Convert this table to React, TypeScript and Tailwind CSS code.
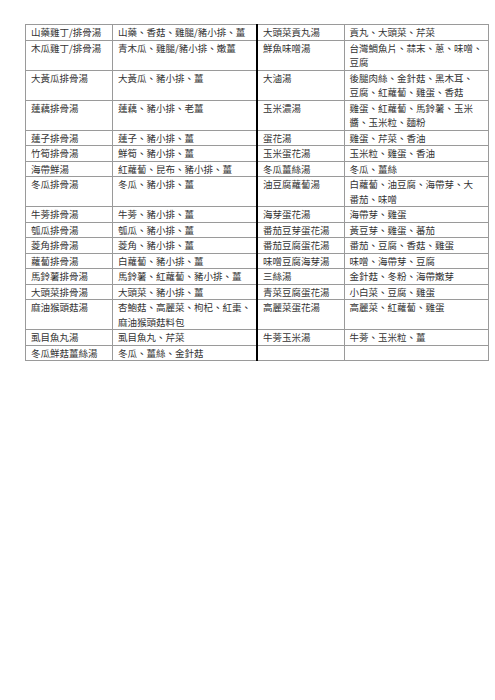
const rows: [string, string[], string, string[]][] = [
  ["山藥雞丁/排骨湯", ["山藥、香菇、雞腿/豬小排、薑"], "大頭菜貢丸湯", ["貢丸、大頭菜、芹菜"]],
  ["木瓜雞丁/排骨湯", ["青木瓜、雞腿/豬小排、嫩薑"], "鮮魚味噌湯", ["台灣鯛魚片、蒜末、蔥、味噌、", "豆腐"]],
  ["大黃瓜排骨湯", ["大黃瓜、豬小排、薑"], "大滷湯", ["後腿肉絲、金針菇、黑木耳、", "豆腐、紅蘿蔔、雞蛋、香菇"]],
  ["蓮藕排骨湯", ["蓮藕、豬小排、老薑"], "玉米濃湯", ["雞蛋、紅蘿蔔、馬鈴薯、玉米", "醬、玉米粒、麵粉"]],
  ["蓮子排骨湯", ["蓮子、豬小排、薑"], "蛋花湯", ["雞蛋、芹菜、香油"]],
  ["竹筍排骨湯", ["鮮筍、豬小排、薑"], "玉米蛋花湯", ["玉米粒、雞蛋、香油"]],
  ["海帶鮮湯", ["紅蘿蔔、昆布、豬小排、薑"], "冬瓜薑絲湯", ["冬瓜、薑絲"]],
  ["冬瓜排骨湯", ["冬瓜、豬小排、薑"], "油豆腐蘿蔔湯", ["白蘿蔔、油豆腐、海帶芽、大", "番茄、味噌"]],
  ["牛蒡排骨湯", ["牛蒡、豬小排、薑"], "海芽蛋花湯", ["海帶芽、雞蛋"]],
  ["瓠瓜排骨湯", ["瓠瓜、豬小排、薑"], "番茄豆芽蛋花湯", ["黃豆芽、雞蛋、蕃茄"]],
  ["菱角排骨湯", ["菱角、豬小排、薑"], "番茄豆腐蛋花湯", ["番茄、豆腐、香菇、雞蛋"]],
  ["蘿蔔排骨湯", ["白蘿蔔、豬小排、薑"], "味噌豆腐海芽湯", ["味噌、海帶芽、豆腐"]],
  ["馬鈴薯排骨湯", ["馬鈴薯、紅蘿蔔、豬小排、薑"], "三絲湯", ["金針菇、冬粉、海帶嫩芽"]],
  ["大頭菜排骨湯", ["大頭菜、豬小排、薑"], "青菜豆腐蛋花湯", ["小白菜、豆腐、雞蛋"]],
  ["麻油猴頭菇湯", ["杏鮑菇、高麗菜、枸杞、紅棗、", "麻油猴頭菇料包"], "高麗菜蛋花湯", ["高麗菜、紅蘿蔔、雞蛋"]],
  ["虱目魚丸湯", ["虱目魚丸、芹菜"], "牛蒡玉米湯", ["牛蒡、玉米粒、薑"]],
  ["冬瓜鮮菇薑絲湯", ["冬瓜、薑絲、金針菇"], "", []],
];

const cell = "border border-[#9a9a9a] px-[5px] align-top whitespace-nowrap overflow-hidden";

const Lines = ({ lines }: { lines: string[] }) => (
  <>
    {lines.map((l, i) => (
      <div key={i}>{l}</div>
    ))}
  </>
);

export default function App() {
  return (
    <div className="min-h-[700px] w-[495px] bg-white pt-[24px] pl-[25px]">
      <table
        className="table-fixed border-collapse text-[9.5px] leading-[14.5px] text-[#333]"
        style={{ fontFamily: '"Noto Sans CJK TC", "Noto Sans", sans-serif' }}
      >
        <colgroup>
          <col className="w-[87px]" />
          <col className="w-[136px]" />
          <col className="w-[87px]" />
          <col className="w-[135px]" />
        </colgroup>
        <tbody>
          {rows.map(([a, b, c, d], i) => (
            <tr key={i}>
              <td className={cell}>{a}</td>
              <td className={cell}>
                <Lines lines={b} />
              </td>
              <td className={`${cell} border-l-[2px] border-l-black`}>{c}</td>
              <td className={cell}>
                <Lines lines={d} />
              </td>
            </tr>
          ))}
        </tbody>
      </table>
    </div>
  );
}
